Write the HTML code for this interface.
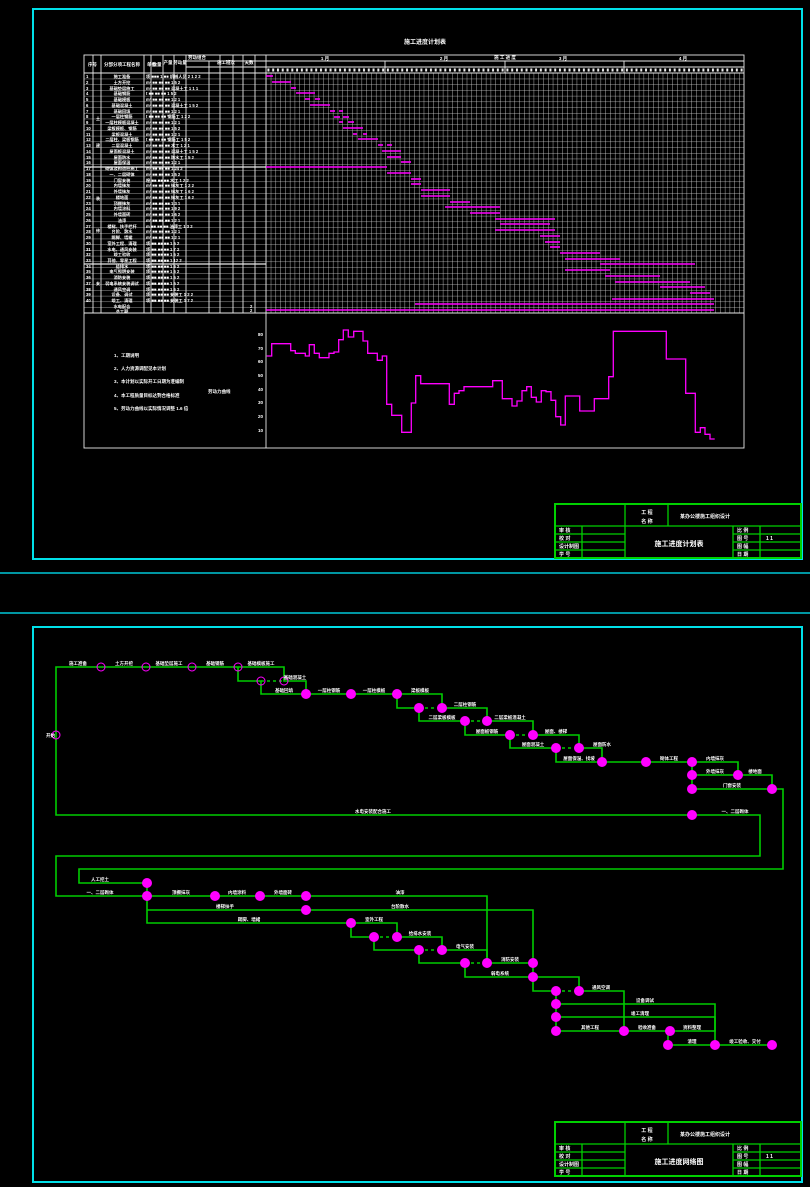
<!DOCTYPE html>
<html><head><meta charset="utf-8"><style>
html,body{margin:0;padding:0;background:#000;}
svg{display:block}
text{font-family:"Liberation Sans","Noto Sans CJK SC",sans-serif;fill:#fff;font-weight:bold}
</style></head><body>
<svg width="810" height="1187" viewBox="0 0 810 1187" xmlns="http://www.w3.org/2000/svg">
<defs>
<pattern id="gg" x="266" y="73" width="4.78" height="5.714" patternUnits="userSpaceOnUse">
<path d="M0 0V5.714M0 0H4.78" stroke="#d8d8d8" stroke-width="0.8" fill="none"/>
</pattern>
<pattern id="rr" x="84" y="73" width="200" height="5.714" patternUnits="userSpaceOnUse">
<path d="M0 0H200" stroke="#d8d8d8" stroke-width="0.8"/>
</pattern>
<pattern id="dg" x="266" y="67" width="4.78" height="6" patternUnits="userSpaceOnUse">
<rect x="1.4" y="1.5" width="2" height="3" fill="#eee"/>
</pattern>
</defs>
<rect width="810" height="1187" fill="#000"/>

<rect x="33" y="9" width="769" height="550" fill="none" stroke="#00e0e8" stroke-width="2"/>
<line x1="0" y1="573" x2="810" y2="573" stroke="#00c8d8" stroke-width="1.5"/>
<line x1="0" y1="613" x2="810" y2="613" stroke="#00c8d8" stroke-width="1.5"/>
<rect x="33" y="627" width="769" height="555" fill="none" stroke="#00e0e8" stroke-width="2"/>

<text x="425" y="44" font-size="6" text-anchor="middle">施工进度计划表</text>

<rect x="266" y="73" width="478" height="240" fill="url(#gg)"/>
<rect x="84" y="73" width="182" height="240" fill="url(#rr)"/>
<rect x="266" y="67" width="478" height="6" fill="url(#dg)"/>
<g stroke="#e8e8e8" stroke-width="0.9" fill="none">
<rect x="84" y="55" width="660" height="393"/>
<line x1="84" y1="73" x2="744" y2="73"/>
<line x1="84" y1="313" x2="744" y2="313"/>
<line x1="266" y1="61" x2="744" y2="61"/>
<line x1="266" y1="67" x2="744" y2="67"/>
<line x1="186" y1="61" x2="266" y2="61"/>
<line x1="186" y1="67" x2="266" y2="67"/>
<line x1="266" y1="55" x2="266" y2="448"/>
<line x1="385" y1="61" x2="385" y2="73"/><line x1="505" y1="61" x2="505" y2="73"/><line x1="624" y1="61" x2="624" y2="73"/>
<line x1="93" y1="55" x2="93" y2="313"/><line x1="101" y1="55" x2="101" y2="313"/><line x1="144" y1="55" x2="144" y2="313"/>
<line x1="151" y1="55" x2="151" y2="313"/><line x1="163" y1="55" x2="163" y2="313"/><line x1="174" y1="55" x2="174" y2="313"/>
<line x1="186" y1="55" x2="186" y2="313"/><line x1="209" y1="61" x2="209" y2="313"/><line x1="220" y1="55" x2="220" y2="313"/>
<line x1="233" y1="55" x2="233" y2="313"/><line x1="243" y1="55" x2="243" y2="313"/><line x1="255" y1="55" x2="255" y2="313"/>
<line x1="84" y1="167" x2="266" y2="167" stroke-width="1.2"/>
<line x1="84" y1="264" x2="266" y2="264" stroke-width="1.2"/>
</g>
<g font-size="4.5">
<text x="88" y="66">序号</text><text x="122" y="66" text-anchor="middle">分部分项工程名称</text>
<text x="147" y="66">单位</text><text x="157" y="66" text-anchor="middle">数量</text>
<text x="168" y="64" text-anchor="middle">产量</text><text x="180" y="64" text-anchor="middle">劳动量</text>
<text x="197" y="59" text-anchor="middle">劳动组合</text><text x="226" y="64" text-anchor="middle">施工班次</text>
<text x="249" y="64" text-anchor="middle">天数</text>
<text x="325" y="60" text-anchor="middle">1 月</text><text x="444" y="60" text-anchor="middle">2 月</text>
<text x="563" y="60" text-anchor="middle">3 月</text><text x="683" y="60" text-anchor="middle">4 月</text>
<text x="505" y="59" text-anchor="middle">施 工 进 度</text>
</g>
<g font-size="4.2" fill="#fff">
<text x="86" y="78">1</text><text x="122" y="78" text-anchor="middle">施工准备</text><text x="146" y="78">项 ■■■ 1 ■■ 机械人员 2  1  2  2</text>
<text x="86" y="84">2</text><text x="122" y="84" text-anchor="middle">土方开挖</text><text x="146" y="84">m³ ■■ ■■ ■■        1  5  2</text>
<text x="86" y="90">3</text><text x="122" y="90" text-anchor="middle">基础垫层施工</text><text x="146" y="90">m³ ■■ ■■ ■■ 混凝土工  1  1  1</text>
<text x="86" y="95">4</text><text x="122" y="95" text-anchor="middle">基础钢筋</text><text x="146" y="95">t ■■ ■■ ■■          1  5  2</text>
<text x="86" y="101">5</text><text x="122" y="101" text-anchor="middle">基础模板</text><text x="146" y="101">m² ■■ ■■ ■■        1  2  1</text>
<text x="86" y="107">6</text><text x="122" y="107" text-anchor="middle">基础混凝土</text><text x="146" y="107">m³ ■■ ■■ ■■ 混凝土工  1  5  2</text>
<text x="86" y="113">7</text><text x="122" y="113" text-anchor="middle">基础回填</text><text x="146" y="113">m³ ■■ ■■ ■■        1  2  1</text>
<text x="86" y="118">8</text><text x="122" y="118" text-anchor="middle">一层柱钢筋</text><text x="146" y="118">t ■■ ■■ ■■ 钢筋工    1  2  2</text>
<text x="86" y="124">9</text><text x="122" y="124" text-anchor="middle">一层柱模板混凝土</text><text x="146" y="124">m³ ■■ ■■ ■■        1  2  1</text>
<text x="86" y="130">10</text><text x="122" y="130" text-anchor="middle">梁板模板、钢筋</text><text x="146" y="130">m² ■■ ■■ ■■        1  5  2</text>
<text x="86" y="136">11</text><text x="122" y="136" text-anchor="middle">梁板混凝土</text><text x="146" y="136">m³ ■■ ■■ ■■        1  2  1</text>
<text x="86" y="141">12</text><text x="122" y="141" text-anchor="middle">二层柱、梁板钢筋</text><text x="146" y="141">t ■■ ■■ ■■ 钢筋工    1  5  2</text>
<text x="86" y="147">13</text><text x="122" y="147" text-anchor="middle">二层混凝土</text><text x="146" y="147">m³ ■■ ■■ ■■ 木工     1  2  1</text>
<text x="86" y="153">14</text><text x="122" y="153" text-anchor="middle">屋面板混凝土</text><text x="146" y="153">m³ ■■ ■■ ■■ 混凝土工  1  5  2</text>
<text x="86" y="159">15</text><text x="122" y="159" text-anchor="middle">屋面防水</text><text x="146" y="159">m² ■■ ■■ ■■ 防水工   1  5  2</text>
<text x="86" y="164">16</text><text x="122" y="164" text-anchor="middle">屋面保温</text><text x="146" y="164">m² ■■ ■■ ■■        1  2  1</text>
<text x="86" y="170">17</text><text x="122" y="170" text-anchor="middle">砌体及构造柱施工</text><text x="146" y="170">m³ ■■ ■■ ■■        1  24 2</text>
<text x="86" y="176">18</text><text x="122" y="176" text-anchor="middle">一、二层砌体</text><text x="146" y="176">m³ ■■ ■■ ■■        1  5  2</text>
<text x="86" y="182">19</text><text x="122" y="182" text-anchor="middle">门窗安装</text><text x="146" y="182">樘 ■■ ■■ ■■ 木工     1  2  2</text>
<text x="86" y="187">20</text><text x="122" y="187" text-anchor="middle">内墙抹灰</text><text x="146" y="187">m² ■■ ■■ ■■ 抹灰工   1  2  2</text>
<text x="86" y="193">21</text><text x="122" y="193" text-anchor="middle">外墙抹灰</text><text x="146" y="193">m² ■■ ■■ ■■ 抹灰工   1  6  2</text>
<text x="86" y="199">22</text><text x="122" y="199" text-anchor="middle">楼地面</text><text x="146" y="199">m² ■■ ■■ ■■ 抹灰工   1  6  2</text>
<text x="86" y="205">23</text><text x="122" y="205" text-anchor="middle">顶棚抹灰</text><text x="146" y="205">m² ■■ ■■ ■■        1  3  1</text>
<text x="86" y="210">24</text><text x="122" y="210" text-anchor="middle">内墙涂料</text><text x="146" y="210">m² ■■ ■■ ■■        1  9  2</text>
<text x="86" y="216">25</text><text x="122" y="216" text-anchor="middle">外墙面砖</text><text x="146" y="216">m² ■■ ■■ ■■        1  6  2</text>
<text x="86" y="222">26</text><text x="122" y="222" text-anchor="middle">油漆</text><text x="146" y="222">m² ■■ ■■ ■■        1  2  1</text>
<text x="86" y="228">27</text><text x="122" y="228" text-anchor="middle">楼梯、扶手栏杆</text><text x="146" y="228">m ■■ ■■ ■■ 油漆工   1  3  2</text>
<text x="86" y="233">28</text><text x="122" y="233" text-anchor="middle">台阶、散水</text><text x="146" y="233">m² ■■ ■■ ■■        1  2  1</text>
<text x="86" y="239">29</text><text x="122" y="239" text-anchor="middle">踢脚、墙裙</text><text x="146" y="239">m² ■■ ■■ ■■        1  2  1</text>
<text x="86" y="245">30</text><text x="122" y="245" text-anchor="middle">室外工程、清理</text><text x="146" y="245">项 ■■ ■■ ■■        1  5  2</text>
<text x="86" y="251">31</text><text x="122" y="251" text-anchor="middle">水电、通风安装</text><text x="146" y="251">项 ■■ ■■ ■■        1  7  2</text>
<text x="86" y="256">32</text><text x="122" y="256" text-anchor="middle">竣工验收</text><text x="146" y="256">项 ■■ ■■ ■■        1  5  2</text>
<text x="86" y="262">33</text><text x="122" y="262" text-anchor="middle">其他、零星工程</text><text x="146" y="262">项 ■■ ■■ ■■        1  12 2</text>
<text x="86" y="268">34</text><text x="122" y="268" text-anchor="middle">给排水</text><text x="146" y="268">项 ■■ ■■ ■■        1  6  2</text>
<text x="86" y="273">35</text><text x="122" y="273" text-anchor="middle">电气照明安装</text><text x="146" y="273">项 ■■ ■■ ■■        1  6  2</text>
<text x="86" y="279">36</text><text x="122" y="279" text-anchor="middle">消防安装</text><text x="146" y="279">项 ■■ ■■ ■■        1  5  2</text>
<text x="86" y="285">37</text><text x="122" y="285" text-anchor="middle">弱电系统安装调试</text><text x="146" y="285">项 ■■ ■■ ■■        1  5  2</text>
<text x="86" y="291">38</text><text x="122" y="291" text-anchor="middle">通风空调</text><text x="146" y="291">项 ■■ ■■ ■■        1  6  2</text>
<text x="86" y="296">39</text><text x="122" y="296" text-anchor="middle">设备、调试</text><text x="146" y="296">项 ■■ ■■ ■■ 安装工   1  2  2</text>
<text x="86" y="302">40</text><text x="122" y="302" text-anchor="middle">竣工、清理</text><text x="146" y="302">项 ■■ ■■ ■■ 安装工   1  7  2</text>
<text x="122" y="308" text-anchor="middle">水电配合</text><text x="250" y="308">2</text>
<text x="122" y="313" text-anchor="middle">总工期</text><text x="250" y="312">2</text>
</g>
<g font-size="4" fill="#fff">
<text x="96" y="120">土</text><text x="96" y="147">建</text><text x="96" y="200">装</text><text x="96" y="232">修</text><text x="96" y="285">安</text>
</g>
<g stroke="#ff00ff" stroke-width="1.6">
<line x1="266" x2="273" y1="76" y2="76"/><line x1="272" x2="291" y1="82" y2="82"/><line x1="291" x2="296" y1="88" y2="88"/>
<line x1="296" x2="315" y1="93" y2="93"/><line x1="305" x2="310" y1="99" y2="99"/><line x1="315" x2="320" y1="99" y2="99"/>
<line x1="310" x2="330" y1="105" y2="105"/><line x1="330" x2="335" y1="111" y2="111"/><line x1="339" x2="343" y1="111" y2="111"/>
<line x1="334" x2="340" y1="117" y2="117"/><line x1="343" x2="349" y1="117" y2="117"/><line x1="339" x2="343" y1="122" y2="122"/>
<line x1="348" x2="354" y1="122" y2="122"/><line x1="343" x2="363" y1="128" y2="128"/><line x1="353" x2="357" y1="134" y2="134"/>
<line x1="363" x2="367" y1="134" y2="134"/><line x1="358" x2="378" y1="139" y2="139"/><line x1="378" x2="383" y1="145" y2="145"/>
<line x1="387" x2="392" y1="145" y2="145"/><line x1="382" x2="401" y1="151" y2="151"/><line x1="387" x2="401" y1="157" y2="157"/>
<line x1="401" x2="411" y1="162" y2="162"/><line x1="266" x2="387" y1="167" y2="167"/><line x1="387" x2="411" y1="173" y2="173"/>
<line x1="411" x2="421" y1="179" y2="179"/><line x1="411" x2="421" y1="184" y2="184"/><line x1="421" x2="450" y1="190" y2="190"/>
<line x1="421" x2="450" y1="196" y2="196"/><line x1="450" x2="470" y1="202" y2="202"/><line x1="445" x2="500" y1="207" y2="207"/>
<line x1="470" x2="500" y1="213" y2="213"/><line x1="495" x2="555" y1="219" y2="219"/><line x1="500" x2="550" y1="224" y2="224"/>
<line x1="495" x2="555" y1="230" y2="230"/><line x1="540" x2="560" y1="236" y2="236"/><line x1="545" x2="560" y1="242" y2="242"/>
<line x1="550" x2="560" y1="247" y2="247"/><line x1="560" x2="600" y1="253" y2="253"/><line x1="565" x2="620" y1="259" y2="259"/>
<line x1="600" x2="695" y1="264" y2="264"/><line x1="565" x2="610" y1="270" y2="270"/><line x1="605" x2="660" y1="276" y2="276"/>
<line x1="615" x2="690" y1="282" y2="282"/><line x1="660" x2="705" y1="287" y2="287"/><line x1="690" x2="710" y1="293" y2="293"/>
<line x1="612" x2="714" y1="299" y2="299"/><line x1="415" x2="714" y1="304" y2="304"/><line x1="266" x2="714" y1="310" y2="310"/>
</g>
<g font-size="4.5">
<text x="114" y="357">1、工期说明</text>
<text x="114" y="370">2、人力资源调配见本计划</text>
<text x="114" y="383">3、本计划以实际开工日期为准编制</text>
<text x="114" y="397">4、本工程质量目标达到合格标准</text>
<text x="114" y="410">5、劳动力曲线以实际情况调整 1.6 倍</text>
<text x="208" y="393">劳动力曲线</text>
<text x="258" y="336">80</text><text x="258" y="350">70</text><text x="258" y="363">60</text><text x="258" y="377">50</text>
<text x="258" y="391">40</text><text x="258" y="404">30</text><text x="258" y="418">20</text><text x="258" y="432">10</text>
</g>
<polyline fill="none" stroke="#ff00ff" stroke-width="1.3" points="266.7,356 271.7,356 271.7,343.7 290.7,343.7 290.7,350.7 295.3,350.7 295.3,353.3 305.3,353.3 305.3,356 309.3,356 309.3,344.7 314.3,344.7 314.3,353.3 319.3,353.3 319.3,357.7 329,357.7 329,353.3 334,353.3 334,352 338.7,352 338.7,339.7 343.3,339.7 343.3,330 348.3,330 348.3,337 353.7,337 353.7,331.3 363,331.3 363,341 367.7,341 367.7,353.3 377.3,353.3 377.3,360.3 382.3,360.3 382.3,356 386.7,356 386.7,404.3 391.7,404.3 391.7,415.3 401.7,415.3 401.7,432.3 411.3,432.3 411.3,403 415.7,403 415.7,375.7 420.7,375.7 420.7,383.7 449.3,383.7 449.3,404.3 454.3,404.3 454.3,393.3 459,393.3 459,390.7 464,390.7 464,386.7 492.7,386.7 492.7,380.7 502.3,380.7 502.3,398.7 512,398.7 512,406 517,406 517,401 522,401 522,390.7 526.7,390.7 526.7,386.7 531.3,386.7 531.3,397.3 536.3,397.3 536.3,402 541.3,402 541.3,390.7 546,390.7 546,391.7 551,391.7 551,400.3 555.7,400.3 555.7,416.7 560.7,416.7 560.7,425 565.3,425 565.3,396 579.7,396 579.7,411 594.3,411 594.3,398.7 608.7,398.7 608.7,376.7 613.3,376.7 613.3,331.3 666.3,331.3 666.3,359 685.7,359 685.7,393.3 695.3,393.3 695.3,432.3 700.3,432.3 700.3,427.7 705,427.7 705,434.3 710,434.3 710,439 714.7,439"/>

<g id="tb">
<g stroke="#00d000" stroke-width="1.3" fill="none">
<rect x="555" y="504" width="246" height="54" stroke-width="2"/>
<line x1="555" y1="526" x2="801" y2="526"/>
<line x1="625" y1="504" x2="625" y2="558"/>
<line x1="668" y1="504" x2="668" y2="526"/>
<line x1="733" y1="526" x2="733" y2="558"/>
<line x1="582" y1="526" x2="582" y2="558"/><line x1="760" y1="526" x2="760" y2="558"/>
<line x1="555" y1="534" x2="625" y2="534"/><line x1="555" y1="542" x2="625" y2="542"/><line x1="555" y1="550" x2="625" y2="550"/>
<line x1="733" y1="534" x2="801" y2="534"/><line x1="733" y1="542" x2="801" y2="542"/><line x1="733" y1="550" x2="801" y2="550"/>
</g>
<g font-size="5">
<text x="647" y="514" text-anchor="middle">工  程</text><text x="647" y="523" text-anchor="middle">名  称</text>
<text x="705" y="518" text-anchor="middle">某办公楼施工组织设计</text>
<text x="559" y="532">审  核</text><text x="559" y="540">校  对</text><text x="559" y="548">设计制图</text><text x="559" y="556">学  号</text>
<text x="737" y="532">比  例</text><text x="737" y="540">图  号</text><text x="766" y="540">1   1</text><text x="737" y="548">图  幅</text><text x="737" y="556">日  期</text>
</g>
</g>
<text x="679" y="546" font-size="7" font-weight="bold" text-anchor="middle">施工进度计划表</text>
<use href="#tb" y="618"/>
<text x="679" y="1164" font-size="7" font-weight="bold" text-anchor="middle">施工进度网络图</text>

<g stroke="#00cc00" stroke-width="1.6" fill="none">
<polyline points="56,735 56,667 284,667 284,681 306,681 306,694"/>
<polyline points="238,667 238,681 261,681 261,694 442,694 442,708"/>
<polyline points="397,694 397,708 419,708 419,721 465,721"/>
<polyline points="442,708 487,708 487,721 533,721 533,735"/>
<polyline points="465,721 465,735 510,735"/>
<polyline points="533,735 579,735 579,748 602,748 602,762"/>
<polyline points="510,735 510,748 556,748"/>
<polyline points="556,748 556,762 738,762 738,775"/>
<polyline points="692,762 692,789 772,789 783,789 783,869 79,869 79,883 147,883"/>
<polyline points="692,775 738,775 772,775 772,789"/>
<polyline points="56,735 56,815 760,815 760,856 56,856 56,896 487,896 487,963"/>
<polyline points="147,883 147,923 351,923 397,923 397,937 442,937 442,950 487,950 487,963 533,963 533,910 147,910"/>
<polyline points="351,923 351,937 374,937 374,950 419,950 419,963 465,963"/>
<polyline points="465,963 465,977 533,977 579,977 579,991 624,991 624,1031"/>
<polyline points="533,963 533,991 556,991 556,1031 715,1031 715,1004 556,1004"/>
<polyline points="556,1017 715,1017 715,1045 668,1045 668,1031"/>
<polyline points="715,1045 772,1045"/>
</g>
<g stroke="#00cc00" stroke-width="1.6" stroke-dasharray="3,3">
<line x1="261" y1="681" x2="284" y2="681"/><line x1="419" y1="708" x2="442" y2="708"/><line x1="465" y1="721" x2="487" y2="721"/>
<line x1="510" y1="735" x2="533" y2="735"/><line x1="556" y1="748" x2="579" y2="748"/><line x1="374" y1="937" x2="397" y2="937"/>
<line x1="419" y1="950" x2="442" y2="950"/><line x1="465" y1="963" x2="487" y2="963"/><line x1="556" y1="991" x2="579" y2="991"/>
</g>
<g fill="#ff00ff" stroke="#ff00ff" stroke-width="1">
<circle cx="56" cy="735" r="4" fill="none"/><circle cx="101" cy="667" r="4" fill="none"/><circle cx="146" cy="667" r="4" fill="none"/>
<circle cx="192" cy="667" r="4" fill="none"/><circle cx="238" cy="667" r="4" fill="none"/><circle cx="261" cy="681" r="4" fill="none"/>
<circle cx="284" cy="681" r="4" fill="none"/><circle cx="306" cy="694" r="4.5"/><circle cx="351" cy="694" r="4.5"/>
<circle cx="397" cy="694" r="4.5"/><circle cx="419" cy="708" r="4.5"/><circle cx="442" cy="708" r="4.5"/>
<circle cx="465" cy="721" r="4.5"/><circle cx="487" cy="721" r="4.5"/><circle cx="510" cy="735" r="4.5"/>
<circle cx="533" cy="735" r="4.5"/><circle cx="556" cy="748" r="4.5"/><circle cx="579" cy="748" r="4.5"/>
<circle cx="602" cy="762" r="4.5"/><circle cx="646" cy="762" r="4.5"/><circle cx="692" cy="762" r="4.5"/>
<circle cx="692" cy="775" r="4.5"/><circle cx="738" cy="775" r="4.5"/><circle cx="692" cy="789" r="4.5"/>
<circle cx="772" cy="789" r="4.5"/><circle cx="692" cy="815" r="4.5"/>
<circle cx="147" cy="883" r="4.5"/><circle cx="147" cy="896" r="4.5"/><circle cx="215" cy="896" r="4.5"/>
<circle cx="260" cy="896" r="4.5"/><circle cx="306" cy="896" r="4.5"/><circle cx="306" cy="910" r="4.5"/>
<circle cx="351" cy="923" r="4.5"/><circle cx="374" cy="937" r="4.5"/><circle cx="397" cy="937" r="4.5"/>
<circle cx="419" cy="950" r="4.5"/><circle cx="442" cy="950" r="4.5"/><circle cx="465" cy="963" r="4.5"/>
<circle cx="487" cy="963" r="4.5"/><circle cx="533" cy="963" r="4.5"/><circle cx="533" cy="977" r="4.5"/>
<circle cx="556" cy="991" r="4.5"/><circle cx="579" cy="991" r="4.5"/><circle cx="556" cy="1004" r="4.5"/>
<circle cx="556" cy="1017" r="4.5"/><circle cx="556" cy="1031" r="4.5"/><circle cx="624" cy="1031" r="4.5"/>
<circle cx="670" cy="1031" r="4.5"/><circle cx="668" cy="1045" r="4.5"/><circle cx="715" cy="1045" r="4.5"/>
<circle cx="772" cy="1045" r="4.5"/>
</g>
<g font-size="4.5">
<text x="78" y="665" text-anchor="middle">施工准备</text><text x="124" y="665" text-anchor="middle">土方开挖</text>
<text x="169" y="665" text-anchor="middle">基础垫层施工</text><text x="215" y="665" text-anchor="middle">基础钢筋</text>
<text x="261" y="665" text-anchor="middle">基础模板施工</text><text x="295" y="679" text-anchor="middle">基础混凝土</text>
<text x="284" y="692" text-anchor="middle">基础回填</text><text x="329" y="692" text-anchor="middle">一层柱钢筋</text>
<text x="374" y="692" text-anchor="middle">一层柱模板</text><text x="420" y="692" text-anchor="middle">梁板模板</text>
<text x="465" y="706" text-anchor="middle">二层柱钢筋</text><text x="442" y="719" text-anchor="middle">二层梁板模板</text>
<text x="510" y="719" text-anchor="middle">二层梁板混凝土</text><text x="487" y="733" text-anchor="middle">屋面板钢筋</text>
<text x="556" y="733" text-anchor="middle">屋面、楼梯</text><text x="533" y="746" text-anchor="middle">屋面混凝土</text>
<text x="602" y="746" text-anchor="middle">屋面防水</text><text x="579" y="760" text-anchor="middle">屋面保温、找坡</text>
<text x="669" y="760" text-anchor="middle">砌体工程</text><text x="715" y="760" text-anchor="middle">内墙抹灰</text>
<text x="715" y="773" text-anchor="middle">外墙抹灰</text><text x="755" y="773" text-anchor="middle">楼地面</text>
<text x="732" y="787" text-anchor="middle">门窗安装</text><text x="373" y="813" text-anchor="middle">水电安装配合施工</text>
<text x="735" y="813" text-anchor="middle">一、二层砌体</text>
<text x="100" y="881" text-anchor="middle">人工挖土</text><text x="100" y="894" text-anchor="middle">一、二层砌体</text>
<text x="181" y="894" text-anchor="middle">顶棚抹灰</text><text x="237" y="894" text-anchor="middle">内墙涂料</text>
<text x="283" y="894" text-anchor="middle">外墙面砖</text><text x="400" y="894" text-anchor="middle">油漆</text>
<text x="225" y="908" text-anchor="middle">楼梯扶手</text><text x="400" y="908" text-anchor="middle">台阶散水</text>
<text x="249" y="921" text-anchor="middle">踢脚、墙裙</text><text x="374" y="921" text-anchor="middle">室外工程</text>
<text x="420" y="935" text-anchor="middle">给排水安装</text><text x="465" y="948" text-anchor="middle">电气安装</text>
<text x="510" y="961" text-anchor="middle">消防安装</text><text x="500" y="975" text-anchor="middle">弱电系统</text>
<text x="601" y="989" text-anchor="middle">通风空调</text><text x="645" y="1002" text-anchor="middle">设备调试</text>
<text x="640" y="1015" text-anchor="middle">竣工清理</text><text x="590" y="1029" text-anchor="middle">其他工程</text>
<text x="647" y="1029" text-anchor="middle">验收准备</text><text x="692" y="1029" text-anchor="middle">资料整理</text>
<text x="692" y="1043" text-anchor="middle">清理</text><text x="745" y="1043" text-anchor="middle">竣工验收、交付</text>
<text x="46" y="737">开始</text>
</g>
</svg>
</body></html>
